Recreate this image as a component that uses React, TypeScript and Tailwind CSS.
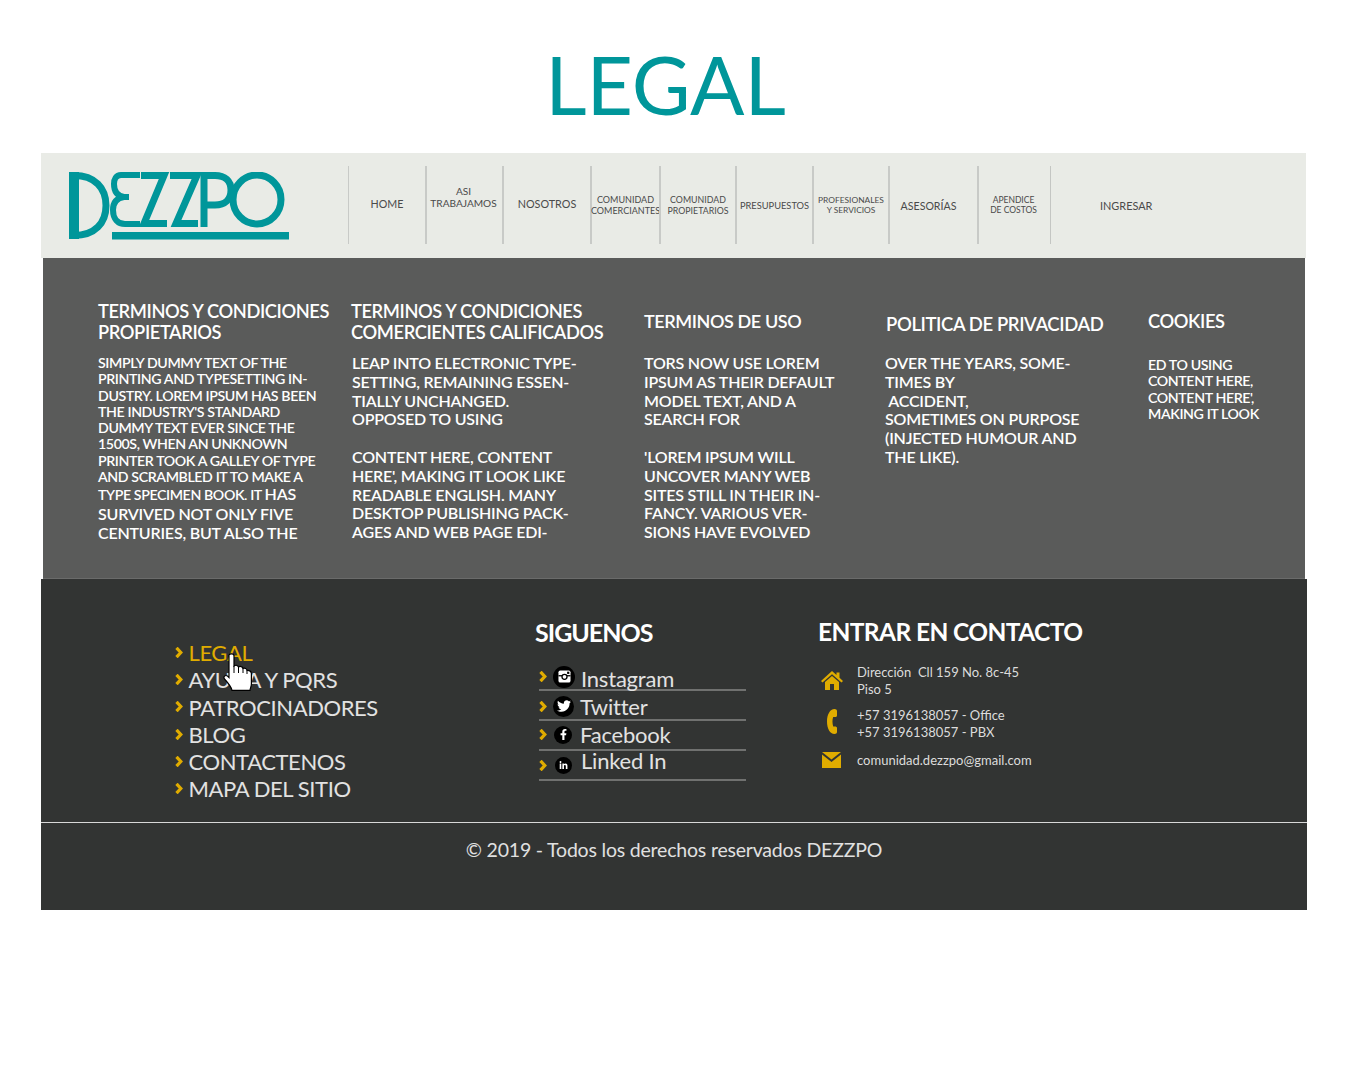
import { FaTwitter, FaFacebookF, FaLinkedinIn } from "react-icons/fa";

const nav = [
  { w: "w-[77px]", lines: ["HOME"], cls: "text-[10.7px] leading-[14px] pb-[2px]" },
  { w: "w-[77px]", lines: ["ASI", "TRABAJAMOS"], cls: "text-[10.1px] leading-[12px] pb-[16px] pr-[2px]" },
  { w: "w-[88px]", lines: ["NOSOTROS"], cls: "text-[10.8px] leading-[14px] pb-[2px]" },
  { w: "w-[69px]", lines: ["COMUNIDAD", "COMERCIANTES"], cls: "text-[9px] leading-[11px]" },
  { w: "w-[76px]", lines: ["COMUNIDAD", "PROPIETARIOS"], cls: "text-[8.8px] leading-[11px]" },
  { w: "w-[77px]", lines: ["PRESUPUESTOS"], cls: "text-[9.3px] leading-[12px] pt-[2px]" },
  { w: "w-[76px]", lines: ["PROFESIONALES", "Y SERVICIOS"], cls: "text-[8.4px] leading-[10px]" },
  { w: "w-[89px]", lines: ["ASESORÍAS"], cls: "text-[10.6px] leading-[14px] pr-[10px] pt-[2px]" },
  { w: "w-[73px]", lines: ["APENDICE", "DE COSTOS"], cls: "text-[8.5px] leading-[10.5px] pr-[2px]" },
];

const bodyLarge = "text-[16px] leading-[18.8px] tracking-[-0.2px]";
const bodySmall = "text-[14.2px] leading-[16.3px] tracking-[-0.4px]";

const columns = [
  {
    w: "w-[253px]",
    head: ["TERMINOS Y CONDICIONES", "PROPIETARIOS"],
    headCls: "text-[18.3px]",
    bodyCls: `mt-[12px] ${bodySmall}`,
    body: [
      "SIMPLY DUMMY TEXT OF THE",
      "PRINTING AND TYPESETTING IN-",
      "DUSTRY. LOREM IPSUM HAS BEEN",
      "THE INDUSTRY'S STANDARD",
      "DUMMY TEXT EVER SINCE THE",
      "1500S, WHEN AN UNKNOWN",
      "PRINTER TOOK A GALLEY OF TYPE",
      "AND SCRAMBLED IT TO MAKE A",
    ],
  },
  {
    w: "w-[292px]",
    head: ["TERMINOS Y CONDICIONES", "COMERCIENTES CALIFICADOS"],
    headCls: "text-[18.3px]",
    bodyCls: `mt-[11px] ml-[1px] ${bodyLarge}`,
    body: [
      "LEAP INTO ELECTRONIC TYPE-",
      "SETTING, REMAINING ESSEN-",
      "TIALLY UNCHANGED.",
      "OPPOSED TO USING",
      " ",
      "CONTENT HERE, CONTENT",
      "HERE', MAKING IT LOOK LIKE",
      "READABLE ENGLISH. MANY",
      "DESKTOP PUBLISHING PACK-",
      "AGES AND WEB PAGE EDI-",
    ],
  },
  {
    w: "w-[241px]",
    head: ["TERMINOS DE USO"],
    headCls: "text-[18px] mt-[10px] ml-[1px]",
    bodyCls: `mt-[22px] ml-[1px] ${bodyLarge}`,
    body: [
      "TORS NOW USE LOREM",
      "IPSUM AS THEIR DEFAULT",
      "MODEL TEXT, AND A",
      "SEARCH FOR",
      " ",
      "'LOREM IPSUM WILL",
      "UNCOVER MANY WEB",
      "SITES STILL IN THEIR IN-",
      "FANCY. VARIOUS VER-",
      "SIONS HAVE EVOLVED",
    ],
  },
  {
    w: "w-[264px]",
    head: ["POLITICA DE PRIVACIDAD"],
    headCls: "text-[18.5px] mt-[13px] ml-[2px]",
    bodyCls: `mt-[19px] ml-[1px] ${bodyLarge}`,
    body: [
      "OVER THE YEARS, SOME-",
      "TIMES BY",
      "\u00a0ACCIDENT,",
      "SOMETIMES ON PURPOSE",
      "(INJECTED HUMOUR AND",
      "THE LIKE).",
    ],
  },
  {
    w: "w-[140px]",
    head: ["COOKIES"],
    headCls: "text-[18.3px] mt-[10px]",
    bodyCls: `mt-[25px] ${bodySmall}`,
    body: ["ED TO USING", "CONTENT HERE,", "CONTENT HERE',", "MAKING IT LOOK"],
  },
];

const links = ["LEGAL", "AYUDA Y PQRS", "PATROCINADORES", "BLOG", "CONTACTENOS", "MAPA DEL SITIO"];

const InstagramGlyph = () => (
  <svg viewBox="0 0 14 14" className="w-[13px] h-[13px]">
    <rect x="0.5" y="0.5" width="13" height="13" rx="2" fill="#fff" />
    <rect x="0.5" y="5.5" width="13" height="1.4" fill="#000" />
    <circle cx="7" cy="7.4" r="3.4" fill="#000" />
    <circle cx="7" cy="7.4" r="2" fill="#fff" />
    <rect x="9.8" y="1.8" width="2.4" height="2.4" fill="#000" />
  </svg>
);

const social = [
  { name: "Instagram", glyph: <InstagramGlyph />, size: "w-[22px] h-[22px] ml-[6px] mr-[6px]", row: "mt-[3px]", text: "pt-[7px]" },
  { name: "Twitter", glyph: <FaTwitter size={14} />, size: "w-[21px] h-[21px] ml-[6px] mr-[6px]", row: "mt-[2px]", text: "pt-[4px]" },
  { name: "Facebook", glyph: <FaFacebookF size={11} />, size: "w-[18px] h-[18px] ml-[7px] mr-[8px]", row: "-mt-[1px]", text: "" },
  { name: "Linked In", glyph: <FaLinkedinIn size={9} />, size: "w-[17px] h-[17px] ml-[8px] mr-[9px]", row: "mt-0", text: "-mt-[8px]" },
];

const Chevron = ({ className }: { className: string }) => (
  <svg viewBox="0 0 8 11" className={`w-[8px] h-[11px] shrink-0 ${className}`} fill="none" stroke="#e0ac00" strokeWidth="3.2">
    <path d="M1.5 0.8L5.8 5.5L1.5 10.2" />
  </svg>
);

const Logo = () => (
  <svg viewBox="0 0 220 68" className="w-[220px] h-[68px]" fill="none" stroke="#00969a" strokeWidth="7">
    <path strokeWidth="10" d="M5 0V67" />
    <path strokeWidth="7" d="M5 3.5C26 3.5 37 16 37 33.5S26 63.5 5 63.5" />
    <path strokeWidth="6" d="M71 3H52C47 3 45 7 45 12C45 20 49 24 55 25C48 26 44 30 44 38C44 47 49 52 56 52H71" />
    <path strokeWidth="6" d="M49 25H60" />
    <path strokeWidth="7" d="M72 3.5H95L75 51.5H98" />
    <path strokeWidth="7" d="M101 3.5H128L107 51.5H129" />
    <path strokeWidth="7" d="M135 55V3.5H146C156 3.5 162 9 162 18S156 33 146 33H135" />
    <ellipse cx="188" cy="27.5" rx="24" ry="24.5" strokeWidth="7" />
    <rect x="43" y="60" width="177" height="7.5" fill="#00969a" stroke="none" />
  </svg>
);

const HandCursor = () => (
  <svg viewBox="0 0 29 38" className="absolute left-[182px] top-[74px] w-[29px] h-[38px]" fill="#fff" stroke="#000" strokeWidth="1.2">
    <path d="M6 2C7 0.4 10.5 0.4 11 2.5V13C12.5 11.8 15 12 15.5 14C17 13 19.5 13.4 20 15.5C21.5 14.8 24 15.4 24 17.5C25.5 17 28.4 18 28.4 20.5V31C28.4 33.5 27 35.5 27 37.4H9C8.5 34 6 31 1.5 26C0 24 2 21.5 4.5 23L6 24.5Z" />
    <path d="M11 13V20M15.5 14V20M20 15.5V20M24 17.5V21" strokeWidth="1" />
  </svg>
);

const HomeIcon = () => (
  <svg viewBox="0 0 22 19" className="w-[22px] h-[19px]" fill="#e0ac00">
    <path d="M11 0L15.5 4V1.5H18.5V6.7L22 10L20.5 11.4L11 3.2L1.5 11.4L0 10Z" />
    <path d="M4 11L11 5L18 11V19H13V13H9V19H4Z" />
  </svg>
);

const PhoneIcon = () => (
  <svg viewBox="0 0 10 25" className="w-[10px] h-[25px]" fill="#e0ac00">
    <path d="M7.5 0C9 0 10 0.8 10 2V6.5C10 7.6 9 8 8 8H6.2C5.2 10.5 5.2 14.5 6.2 17.5H8C9 17.5 10 18 10 19V23C10 24.2 9 25 7.5 25C3 25 0 19.5 0 12.5S3 0 7.5 0Z" />
  </svg>
);

const MailIcon = () => (
  <svg viewBox="0 0 19 16" className="w-[19px] h-[16px]" fill="#e0ac00">
    <path d="M0 0H19L9.5 7.4Z" />
    <path d="M0 2.6L9.5 10L19 2.6V16H0Z" />
  </svg>
);

export default function App() {
  return (
    <div className="bg-white h-[1092px] font-['Lato','Liberation_Sans',sans-serif] overflow-hidden">
      <h1 className="h-[153px] pt-[29px] pr-[15px] text-center text-[80.5px] leading-[110px] text-[#00969a] font-normal">LEGAL</h1>

      <header className="ml-[41px] w-[1265px] h-[105px] bg-[#e9ebe6] flex items-start">
        <div className="w-[307px] pl-[28px] pt-[19px] shrink-0">
          <Logo />
        </div>
        <nav className="flex mt-[13px] h-[78px] border-r border-[#c4c6c3]">
          {nav.map((item) => (
            <div key={item.lines.join()} className={`${item.w} border-l-2 first:border-l border-[#c8cac7] flex flex-col items-center justify-center text-[#4a4a4a] text-center whitespace-nowrap ${item.cls}`}>
              {item.lines.map((l) => (
                <span key={l}>{l}</span>
              ))}
            </div>
          ))}
        </nav>
        <div className="mt-[46px] ml-[49px] text-[10.9px] leading-[14px] text-[#4a4a4a]">INGRESAR</div>
      </header>

      <section className="ml-[43px] w-[1262px] h-[321px] bg-[#5a5b5a] border-b border-[#6a6b6a] pl-[55px] pt-[43px] flex text-white font-semibold">
        {columns.map((col) => (
          <div key={col.head.join()} className={`${col.w} shrink-0`}>
            <h3 className={`leading-[21px] tracking-[-0.4px] font-semibold ${col.headCls}`}>
              {col.head.map((l) => (
                <div key={l}>{l}</div>
              ))}
            </h3>
            <div className={`${col.bodyCls} whitespace-pre`}>
              {col.body.map((l, i) => (
                <div key={i}>{l}</div>
              ))}
              {col.w === "w-[253px]" && (
                <div className={bodyLarge}>
                  <div><span className="text-[14.2px] tracking-[-0.4px]">TYPE SPECIMEN BOOK. IT </span>HAS</div>
                  <div>SURVIVED NOT ONLY FIVE</div>
                  <div>CENTURIES, BUT ALSO THE</div>
                </div>
              )}
            </div>
          </div>
        ))}
      </section>

      <footer className="ml-[41px] w-[1266px] h-[331px] bg-[#323433]">
        <div className="h-[244px] border-b border-[#d8d8d8] flex">
          <div className="relative w-[494px] shrink-0">
            <ul className="pl-[134px] pt-[60px] text-[22px] leading-[27.3px] tracking-[-0.4px] text-[#e2e2e2] font-normal">
              {links.map((l, i) => (
                <li key={l} className={`flex items-center gap-[5.5px] whitespace-nowrap ${i === 0 ? "text-[#e0ac00]" : ""}`}>
                  <Chevron className="-mt-[1px]" />
                  {l}
                </li>
              ))}
            </ul>
            <HandCursor />
          </div>

          <div className="w-[284px] shrink-0 pt-[38px]">
            <h3 className="text-[25px] leading-[30px] font-bold tracking-[-1px] text-white">SIGUENOS</h3>
            <ul className="ml-[4px] w-[207px] mt-[14px]">
              {social.map(({ name, glyph, size, row, text }) => (
                <li key={name} className="h-[30px] border-b-2 border-[#707170] flex items-center text-[22px] tracking-[-0.2px] font-normal text-[#e2e2e2]">
                  <Chevron className={row} />
                  <span className={`${size} rounded-full bg-black text-white flex items-center justify-center shrink-0 ${row}`}>
                    {glyph}
                  </span>
                  <span className={`leading-[28px] ${text}`}>{name}</span>
                </li>
              ))}
            </ul>
          </div>

          <div className="pt-[38px]">
            <h3 className="text-[24.5px] leading-[30px] font-bold tracking-[-0.6px] text-white -ml-[1px]">ENTRAR EN CONTACTO</h3>
            <div className="mt-[17px] flex flex-col text-[13px] leading-[17px] text-[#dcdcdc]">
              <div className="flex items-center h-[34px]">
                <span className="w-[38px] flex pl-[2px] -mt-[2px]"><HomeIcon /></span>
                <div>
                  <div className="whitespace-pre">Dirección  Cll 159 No. 8c-45</div>
                  <div>Piso 5</div>
                </div>
              </div>
              <div className="flex items-center h-[34px] mt-[9px]">
                <span className="w-[38px] flex pl-[8px] -mt-[6px]"><PhoneIcon /></span>
                <div>
                  <div>+57 3196138057 - Office</div>
                  <div>+57 3196138057 - PBX</div>
                </div>
              </div>
              <div className="flex items-center h-[17px] mt-[11px]">
                <span className="w-[38px] flex pl-[3px] -mt-[2px]"><MailIcon /></span>
                <div>comunidad.dezzpo@gmail.com</div>
              </div>
            </div>
          </div>
        </div>
        <p className="pt-[14px] text-center text-[19.5px] leading-[26px] tracking-[-0.2px] font-normal text-[#e0e0e0]">© 2019 - Todos los derechos reservados DEZZPO</p>
      </footer>
    </div>
  );
}
